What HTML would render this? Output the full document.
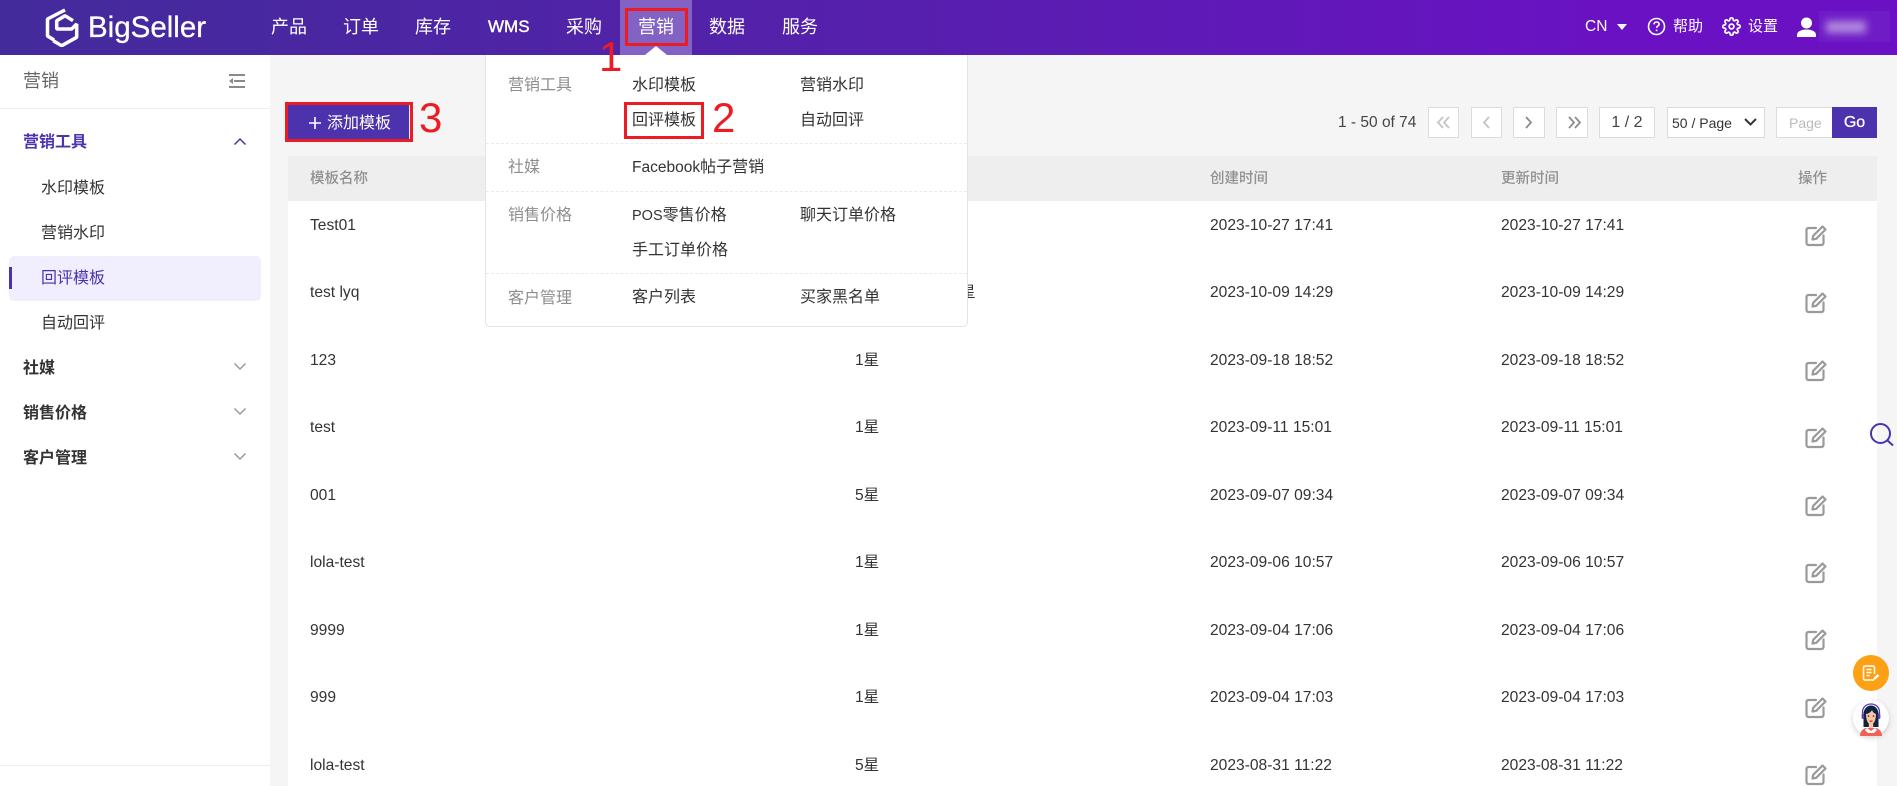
<!DOCTYPE html>
<html lang="zh-CN"><head><meta charset="utf-8"><title>BigSeller</title>
<style>
*{box-sizing:border-box}
html,body{margin:0;padding:0;width:1897px;height:786px;overflow:hidden;background:#f5f5f5}
body{position:relative;font-family:"Liberation Sans","Noto Sans CJK SC",sans-serif;color:#333;font-size:15px}
.a{position:absolute}
.t{position:absolute;white-space:nowrap;line-height:20px;height:20px}
.hd{left:0;top:0;width:1897px;height:55px;background:linear-gradient(90deg,#432b9b 0%,#5520ac 45%,#6a12c3 85%,#6a12c3 100%)}
.n{color:#fff;font-size:18px;top:17px}
.r{color:#fff;font-size:15px;top:17px}
.red{position:absolute;border:3px solid #ed1c24;z-index:30}
.num{position:absolute;color:#ed1c24;font-family:"Liberation Sans",sans-serif;font-size:42px;line-height:40px;z-index:30}
.sb{left:0;top:55px;width:270px;height:731px;background:#fff}
.s{font-size:16px;color:#333}
.sbo{font-size:16px;font-weight:700;color:#333}
.pg{position:absolute;top:107px;height:31px;border:1px solid #dcdcdc;background:#fff}
.th{font-size:14.5px;color:#909090;font-weight:500;top:169px}
.c{font-size:15.6px;color:#333}
.dd{left:485px;top:55px;width:483px;height:272px;background:#fff;border:1px solid #e4e4e4;border-top:0;border-radius:0 0 5px 5px;z-index:20}
.m{font-size:16px;color:#333;z-index:21}
.l{font-size:16px;color:#8e8e8e;z-index:21}
.dash{left:486px;width:481px;height:0;border-top:1px dashed #eaeaea;z-index:21}
</style></head><body>

<div class="a hd"></div>
<svg class="a" style="left:45px;top:8px" width="36" height="39" viewBox="0 0 36 39" fill="none" stroke="#fff" stroke-width="3.5" stroke-linejoin="bevel">
<path d="M20 2 2.500 11v17l6.500 4"/>
<path d="M28 12.700 20 7.700 11.700 12.700V21H26.700L31.700 16V29.300L16.700 37.700 8.300 32.700"/>
</svg>
<div class="t" style="left:88px;top:13px;height:30px;line-height:30px;font-size:29.5px;color:#fff;-webkit-text-stroke:.3px #fff">BigSeller</div>

<div class="t n" style="left:271px">产品</div>
<div class="t n" style="left:343px">订单</div>
<div class="t n" style="left:415px">库存</div>
<div class="t n" style="left:488px;font-size:17px;-webkit-text-stroke:.4px #fff">WMS</div>
<div class="t n" style="left:566px">采购</div>
<div class="a" style="left:620px;top:0;width:72px;height:55px;background:#8263c4"></div>
<div class="t n" style="left:638px">营销</div>
<div class="t n" style="left:709px">数据</div>
<div class="t n" style="left:782px">服务</div>
<div class="a" style="left:645px;top:46px;width:0;height:0;border-left:11px solid transparent;border-right:11px solid transparent;border-bottom:9px solid #fff;z-index:22"></div>

<div class="t r" style="left:1585px;font-size:15.5px">CN</div>
<div class="a" style="left:1617px;top:24px;width:0;height:0;border-left:5.5px solid transparent;border-right:5.5px solid transparent;border-top:6px solid #fff"></div>
<svg class="a" style="left:1647px;top:17px" width="19" height="19" viewBox="0 0 19 19" fill="none" stroke="#fff" stroke-width="1.6"><circle cx="9.5" cy="9.5" r="8"/><path d="M7 7.400c0-1.500 1.100-2.400 2.600-2.400s2.500.9 2.500 2.200c0 1.800-2.500 1.900-2.500 3.700"/><path d="M9.600 12.600v1.600"/></svg>
<div class="t r" style="left:1673px">帮助</div>
<svg class="a" style="left:1722px;top:17px" width="19" height="19" viewBox="0 0 24 24" fill="none" stroke="#fff" stroke-width="2.200"><circle cx="12" cy="12" r="3"/><path d="M19.400 15a1.650 1.650 0 0 0 .33 1.820l.06.06a2 2 0 0 1 0 2.830 2 2 0 0 1-2.830 0l-.06-.06a1.650 1.650 0 0 0-1.820-.33 1.650 1.650 0 0 0-1 1.510V21a2 2 0 0 1-2 2 2 2 0 0 1-2-2v-.09A1.650 1.650 0 0 0 9 19.400a1.650 1.650 0 0 0-1.820.33l-.06.06a2 2 0 0 1-2.830 0 2 2 0 0 1 0-2.830l.06-.06a1.650 1.650 0 0 0 .33-1.820 1.650 1.650 0 0 0-1.510-1H3a2 2 0 0 1-2-2 2 2 0 0 1 2-2h.09A1.650 1.650 0 0 0 4.600 9a1.650 1.650 0 0 0-.33-1.820l-.06-.06a2 2 0 0 1 0-2.830 2 2 0 0 1 2.830 0l.06.06a1.650 1.650 0 0 0 1.820.33H9a1.650 1.650 0 0 0 1-1.510V3a2 2 0 0 1 2-2 2 2 0 0 1 2 2v.09a1.650 1.650 0 0 0 1 1.510 1.650 1.650 0 0 0 1.820-.33l.06-.06a2 2 0 0 1 2.830 0 2 2 0 0 1 0 2.830l-.06.06a1.650 1.650 0 0 0-.33 1.820V9a1.650 1.650 0 0 0 1.510 1H21a2 2 0 0 1 2 2 2 2 0 0 1-2 2h-.09a1.650 1.650 0 0 0-1.510 1z"/></svg>
<div class="t r" style="left:1748px">设置</div>
<svg class="a" style="left:1796px;top:17px" width="21" height="20" viewBox="0 0 21 20" fill="#fff"><circle cx="10.500" cy="6" r="5.500"/><path d="M1 20v-2c0-3.500 4-5.500 9.500-5.500S20 14.500 20 18v2Z"/></svg>
<div class="a" style="left:1819px;top:11px;width:71px;height:31px;background:#6f1cc6"></div>
<div class="a" style="left:1826px;top:21px;width:40px;height:12px;background:#b18ade;filter:blur(4px)"></div>

<div class="a sb"></div>
<div class="t" style="left:23px;top:71px;font-size:18px;color:#666">营销</div>
<svg class="a" style="left:228px;top:73px" width="18" height="16" viewBox="0 0 18 16" fill="#8a8a8a"><rect x="1" y="1" width="16" height="2"/><rect x="1" y="13" width="16" height="2"/><rect x="6" y="7" width="11" height="2"/><path d="M1 8l4-3v6Z"/></svg>
<div class="a" style="left:0;top:108px;width:270px;height:1px;background:#eee"></div>
<div class="t sbo" style="left:23px;top:133px;color:#4c33ad">营销工具</div>
<svg class="a" style="left:233px;top:137px" width="14" height="9" viewBox="0 0 14 9" fill="none" stroke="#4c33ad" stroke-width="1.500"><path d="M1.500 7.500 7 2l5.500 5.500"/></svg>
<div class="t s" style="left:41px;top:179px">水印模板</div>
<div class="t s" style="left:41px;top:224px">营销水印</div>
<div class="a" style="left:9px;top:256px;width:252px;height:45px;background:#f1eefd;border-radius:5px"></div>
<div class="a" style="left:9px;top:267px;width:3px;height:22px;background:#4c33ad"></div>
<div class="t s" style="left:41px;top:269px;color:#4c33ad">回评模板</div>
<div class="t s" style="left:41px;top:314px">自动回评</div>
<div class="t sbo" style="left:23px;top:359px">社媒</div>
<div class="t sbo" style="left:23px;top:404px">销售价格</div>
<div class="t sbo" style="left:23px;top:449px">客户管理</div>
<svg class="a" style="left:233px;top:362px" width="14" height="9" viewBox="0 0 14 9" fill="none" stroke="#9a9a9a" stroke-width="1.500"><path d="M1.500 1.500 7 7l5.500-5.500"/></svg>
<svg class="a" style="left:233px;top:407px" width="14" height="9" viewBox="0 0 14 9" fill="none" stroke="#9a9a9a" stroke-width="1.500"><path d="M1.500 1.500 7 7l5.500-5.500"/></svg>
<svg class="a" style="left:233px;top:452px" width="14" height="9" viewBox="0 0 14 9" fill="none" stroke="#9a9a9a" stroke-width="1.500"><path d="M1.500 1.500 7 7l5.500-5.500"/></svg>
<div class="a" style="left:0;top:765px;width:270px;height:1px;background:#eee"></div>

<!-- add button -->
<div class="a" style="left:288px;top:105px;width:121px;height:34px;background:#4c33ad"></div>
<svg class="a" style="left:309px;top:117px" width="12" height="12" viewBox="0 0 12 12" stroke="#fff" stroke-width="1.600"><path d="M6 0v12M0 6h12"/></svg>
<div class="t" style="left:327px;top:114px;font-size:16px;color:#fff">添加模板</div>
<div class="red" style="left:285px;top:102px;width:128px;height:40px"></div>
<div class="num" style="left:419px;top:98px">3</div>

<!-- pagination -->
<div class="t" style="left:1338px;top:113px;font-size:15.5px;color:#444">1 - 50 of 74</div>
<div class="pg" style="left:1428px;width:31px"></div>
<div class="pg" style="left:1471px;width:31px"></div>
<div class="pg" style="left:1513px;width:32px"></div>
<div class="pg" style="left:1556px;width:32px"></div>
<svg class="a" style="left:1428px;top:107px" width="160" height="31" viewBox="0 0 160 31" fill="none" stroke-width="1.800"><path d="M15 10l-5 5.500 5 5.500M21 10l-5 5.500 5 5.500" stroke="#c4c4c4"/><path d="M61 10l-5 5.500 5 5.500" stroke="#c4c4c4"/><path d="M98 10l5 5.500-5 5.500" stroke="#8c8c8c"/><path d="M141 10l5 5.500-5 5.500M147 10l5 5.500-5 5.500" stroke="#8c8c8c"/></svg>
<div class="pg" style="left:1599px;width:56px;text-align:center;line-height:29px;font-size:16px;color:#444">1 / 2</div>
<div class="pg" style="left:1667px;width:98px;line-height:30px;font-size:14px;color:#333;padding-left:4px">50 / Page</div>
<svg class="a" style="left:1744px;top:117px" width="13" height="10" viewBox="0 0 13 10" fill="none" stroke="#333" stroke-width="2"><path d="M1 2l5.500 5.500L12 2"/></svg>
<div class="pg" style="left:1776px;width:57px;line-height:30px;font-size:14px;color:#bbb;padding-left:12px">Page</div>
<div class="a" style="left:1832px;top:107px;width:45px;height:31px;background:#4c33ad;color:#fff;text-align:center;line-height:32px;font-size:16px;-webkit-text-stroke:.3px #fff">Go</div>

<!-- table -->
<div class="a" style="left:288px;top:156px;width:1589px;height:630px;background:#fff"></div>
<div class="a" style="left:288px;top:156px;width:1589px;height:45px;background:#eee"></div>
<div class="t th" style="left:310px">模板名称</div>
<div class="t th" style="left:1210px">创建时间</div>
<div class="t th" style="left:1501px">更新时间</div>
<div class="t th" style="left:1798px">操作</div>

<div class="t c" style="left:310px;top:216px">Test01</div><div class="t c" style="left:1210px;top:216px">2023-10-27 17:41</div><div class="t c" style="left:1501px;top:216px">2023-10-27 17:41</div>
<div class="t c" style="left:310px;top:283px">test lyq</div><div class="t c" style="left:960px;top:283px">星</div><div class="t c" style="left:1210px;top:283px">2023-10-09 14:29</div><div class="t c" style="left:1501px;top:283px">2023-10-09 14:29</div>
<div class="t c" style="left:310px;top:351px">123</div><div class="t c" style="left:855px;top:351px">1星</div><div class="t c" style="left:1210px;top:351px">2023-09-18 18:52</div><div class="t c" style="left:1501px;top:351px">2023-09-18 18:52</div>
<div class="t c" style="left:310px;top:418px">test</div><div class="t c" style="left:855px;top:418px">1星</div><div class="t c" style="left:1210px;top:418px">2023-09-11 15:01</div><div class="t c" style="left:1501px;top:418px">2023-09-11 15:01</div>
<div class="t c" style="left:310px;top:486px">001</div><div class="t c" style="left:855px;top:486px">5星</div><div class="t c" style="left:1210px;top:486px">2023-09-07 09:34</div><div class="t c" style="left:1501px;top:486px">2023-09-07 09:34</div>
<div class="t c" style="left:310px;top:553px">lola-test</div><div class="t c" style="left:855px;top:553px">1星</div><div class="t c" style="left:1210px;top:553px">2023-09-06 10:57</div><div class="t c" style="left:1501px;top:553px">2023-09-06 10:57</div>
<div class="t c" style="left:310px;top:621px">9999</div><div class="t c" style="left:855px;top:621px">1星</div><div class="t c" style="left:1210px;top:621px">2023-09-04 17:06</div><div class="t c" style="left:1501px;top:621px">2023-09-04 17:06</div>
<div class="t c" style="left:310px;top:688px">999</div><div class="t c" style="left:855px;top:688px">1星</div><div class="t c" style="left:1210px;top:688px">2023-09-04 17:03</div><div class="t c" style="left:1501px;top:688px">2023-09-04 17:03</div>
<div class="t c" style="left:310px;top:756px">lola-test</div><div class="t c" style="left:855px;top:756px">5星</div><div class="t c" style="left:1210px;top:756px">2023-08-31 11:22</div><div class="t c" style="left:1501px;top:756px">2023-08-31 11:22</div>

<svg width="0" height="0" style="position:absolute"><defs><g id="ed" fill="none" stroke="#9a9a9a" stroke-width="2.200" stroke-linejoin="round" stroke-linecap="round"><path d="M11 3H3.500A2 2 0 0 0 1.500 5v13a2 2 0 0 0 2 2h13a2 2 0 0 0 2-2v-7.500"/><path d="M7.500 14.500l.7-3.700L17.500 1.500l3 3-9.300 9.300Z"/></g></defs></svg>
<svg class="a" style="left:1805px;top:225px" width="22" height="22"><use href="#ed"/></svg>
<svg class="a" style="left:1805px;top:292px" width="22" height="22"><use href="#ed"/></svg>
<svg class="a" style="left:1805px;top:360px" width="22" height="22"><use href="#ed"/></svg>
<svg class="a" style="left:1805px;top:427px" width="22" height="22"><use href="#ed"/></svg>
<svg class="a" style="left:1805px;top:495px" width="22" height="22"><use href="#ed"/></svg>
<svg class="a" style="left:1805px;top:562px" width="22" height="22"><use href="#ed"/></svg>
<svg class="a" style="left:1805px;top:629px" width="22" height="22"><use href="#ed"/></svg>
<svg class="a" style="left:1805px;top:697px" width="22" height="22"><use href="#ed"/></svg>
<svg class="a" style="left:1805px;top:764px" width="22" height="22"><use href="#ed"/></svg>

<!-- dropdown -->
<div class="a dd"></div>
<div class="t l" style="left:508px;top:76px">营销工具</div>
<div class="t m" style="left:632px;top:76px">水印模板</div>
<div class="t m" style="left:800px;top:76px">营销水印</div>
<div class="t m" style="left:632px;top:111px">回评模板</div>
<div class="t m" style="left:800px;top:111px">自动回评</div>
<div class="a dash" style="top:143px"></div>
<div class="t l" style="left:508px;top:158px">社媒</div>
<div class="t m" style="left:632px;top:158px"><span style="font-size:15.5px">Facebook</span>帖子营销</div>
<div class="a dash" style="top:191px"></div>
<div class="t l" style="left:508px;top:206px">销售价格</div>
<div class="t m" style="left:632px;top:206px"><span style="font-size:14.5px">POS</span>零售价格</div>
<div class="t m" style="left:800px;top:206px">聊天订单价格</div>
<div class="t m" style="left:632px;top:241px">手工订单价格</div>
<div class="a dash" style="top:273px"></div>
<div class="t l" style="left:508px;top:289px">客户管理</div>
<div class="t m" style="left:632px;top:288px">客户列表</div>
<div class="t m" style="left:800px;top:288px">买家黑名单</div>

<!-- annotations -->
<div class="red" style="left:625px;top:8px;width:63px;height:38px"></div>
<div class="red" style="left:624px;top:102px;width:80px;height:37px"></div>
<div class="num" style="left:599px;top:37px">1</div>
<div class="num" style="left:712px;top:98px">2</div>

<!-- floating -->
<svg class="a" style="left:1869px;top:422px" width="26" height="26" viewBox="0 0 26 26" fill="none" stroke="#4c33ad" stroke-width="2"><circle cx="11.500" cy="11.500" r="9.500"/><path d="M18.500 18.500l5.500 5"/></svg>
<div class="a" style="left:1853px;top:655px;width:36px;height:36px;border-radius:50%;background:#fca014"></div>
<svg class="a" style="left:1862px;top:665px" width="19" height="17" viewBox="0 0 19 17" fill="none" stroke="#fff" stroke-width="1.500"><path d="M12 15H3a1.500 1.500 0 0 1-1.500-1.500v-11A1.500 1.500 0 0 1 3 1h8a1.500 1.500 0 0 1 1.500 1.500V9"/><path d="M4.500 4.500h5M4.500 7.500h5M4.500 10.500h3"/><path d="M11 15l1-2.500 3.500-3.500 1.800 1.800-3.500 3.500Z" fill="#fff" stroke="none"/></svg>
<div class="a" style="left:1853px;top:700px;width:36px;height:36px;border-radius:50%;background:#fff;box-shadow:0 2px 6px rgba(0,0,0,.18)"></div>
<svg class="a" style="left:1853px;top:700px" width="36" height="36" viewBox="0 0 36 36">
<path d="M7 36c0-4.500 3-7.500 6-8h10c3 .5 6 3.500 6 8Z" fill="#ef6259"/>
<path d="M14 28l4 3 4-3 2 2-3 3h-6l-3-3Z" fill="#fff"/>
<path d="M10.500 27V14c0-5 3.500-8.500 7.500-8.500s7.500 3.500 7.500 8.500v13Z" fill="#0e2340"/>
<path d="M13 14c3-.5 5-2 6-4 1 2.500 2.500 3.500 4 4 0 6-2 10.500-5 10.500S13 20 13 14Z" fill="#f8c6a4"/>
<rect x="15.800" y="24" width="4.400" height="4" fill="#f8c6a4"/>
<path d="M16 20.500h4l-1 1.500h-2Z" fill="#d4413c"/>
<circle cx="15.500" cy="16" r=".8" fill="#222"/><circle cx="20.500" cy="16" r=".8" fill="#222"/>
<path d="M9.500 15V12c0-5 4-8 8.500-8s8.500 3 8.500 8v3" fill="none" stroke="#5a3fb5" stroke-width="1.300"/>
<rect x="8.600" y="14" width="2.600" height="5" rx="1.200" fill="#5a3fb5"/><rect x="24.800" y="14" width="2.600" height="5" rx="1.200" fill="#5a3fb5"/>
</svg>
</body></html>
